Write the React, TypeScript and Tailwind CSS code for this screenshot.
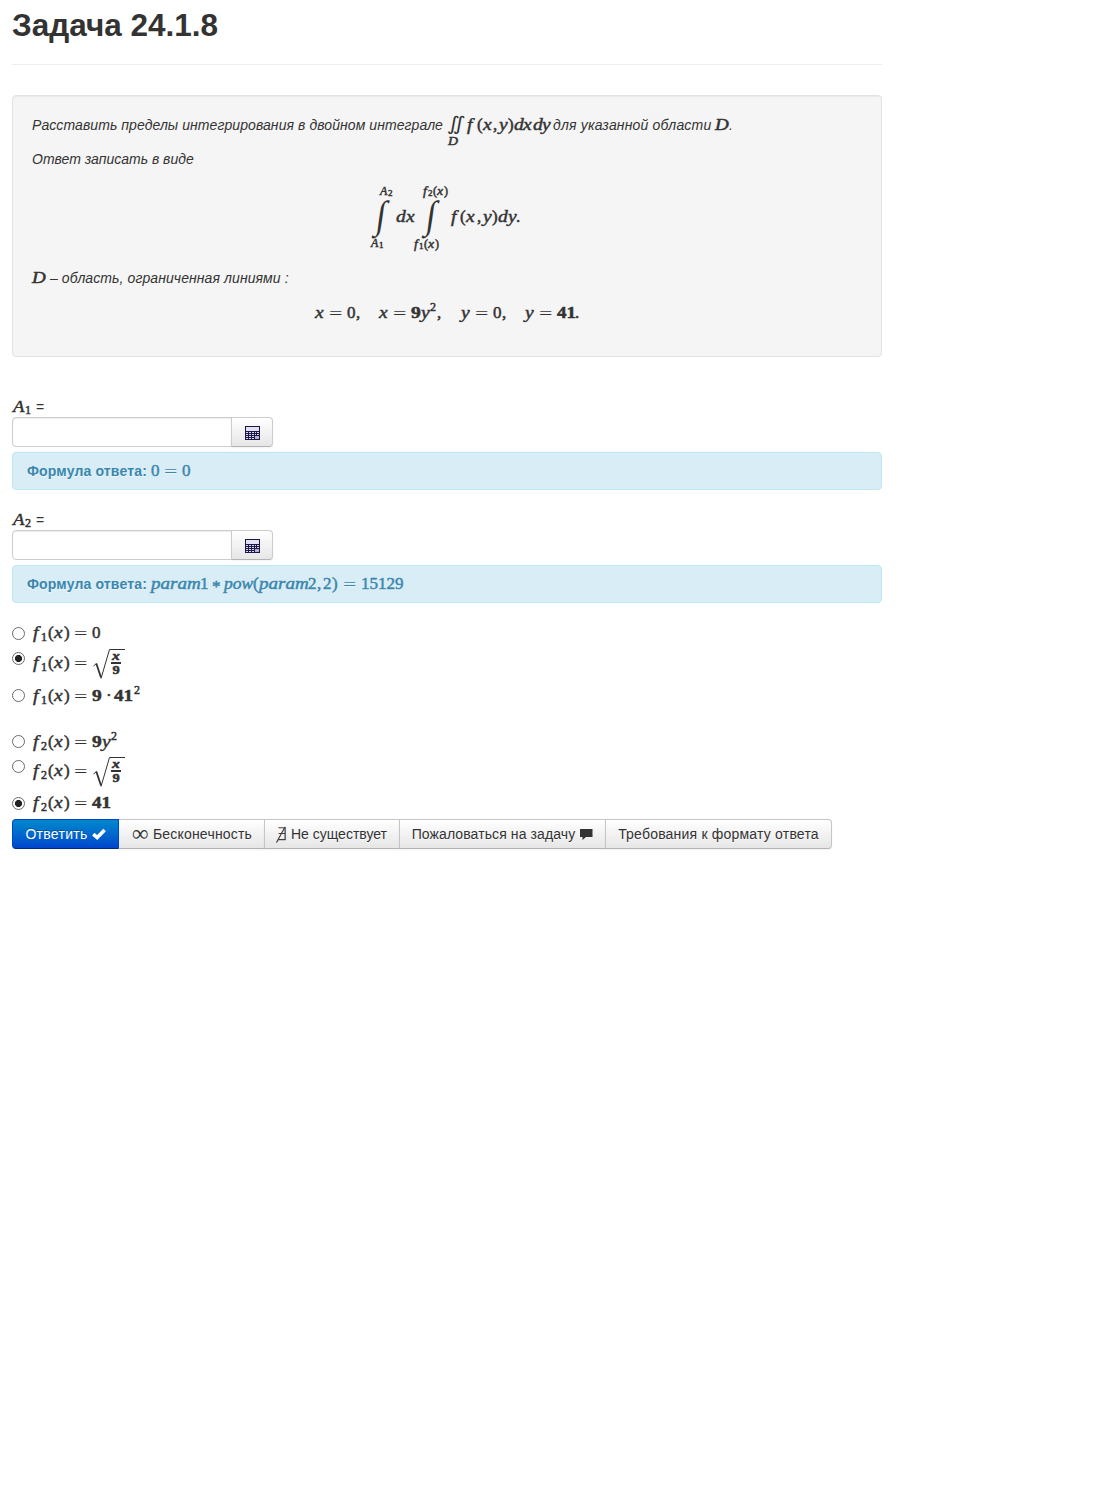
import type { ReactNode } from "react";

/* One fixed-width math atom. */
function T({ c, children }: { c: string; children?: ReactNode }) {
  return <span className={"block shrink-0 whitespace-pre " + c}>{children}</span>;
}

/* Italic variable, slightly widened. */
function V({ c, children }: { c: string; children?: ReactNode }) {
  return (
    <span className={"block shrink-0 whitespace-pre italic [-webkit-text-stroke:0.45px_currentColor] " + c}>
      <span className="block w-full origin-left scale-x-[1.15]">{children}</span>
    </span>
  );
}

function Eq() {
  return (
    <span className="block w-[18px] shrink-0 [-webkit-text-stroke:0]">
      <span className="block w-[10px] origin-left translate-y-px scale-x-[1.4]">=</span>
    </span>
  );
}

const MATH =
  "flex h-5 shrink-0 font-['Liberation_Serif',serif] text-[17px] leading-5 not-italic [-webkit-text-stroke:0.5px_currentColor]";
const SCRIPT =
  "flex h-4 font-['Liberation_Serif',serif] text-[12px] leading-4 [-webkit-text-stroke:0.5px_currentColor]";
const INTEGRAL = "absolute -top-[2px] block origin-center scale-x-[0.88] -skew-x-[9deg] text-[39px] leading-5 [-webkit-text-stroke:0]";

function Sqrt() {
  return (
    <span className="relative -mt-[5px] flex h-8 w-[33px] shrink-0">
      <svg className="absolute left-0 top-0" width="33" height="32" viewBox="0 0 33 32" fill="none" stroke="currentColor">
        <path d="M1.5 18 L4.5 15.5" strokeWidth="1" />
        <path d="M4.3 15.5 L9 29.5" strokeWidth="1.8" />
        <path d="M9 30.5 L17.5 1.5 H33" strokeWidth="1" />
      </svg>
      <span className="ml-[19px] mt-[4px] flex w-[10px] flex-col items-center text-[12px] font-bold leading-[11px]">
        <span className="h-[9px] scale-x-[1.3] italic leading-[8px]">x</span>
        <span className="mt-px h-[2px] w-[10px] shrink-0 bg-current" />
        <span className="h-[11px] scale-x-[1.2] leading-[13px]">9</span>
      </span>
    </span>
  );
}

function Option({
  group,
  sub,
  checked,
  row,
  radio,
  math,
  children,
}: {
  group: string;
  sub: string;
  checked?: boolean;
  row: string;
  radio: string;
  math: string;
  children: ReactNode;
}) {
  return (
    <label className={"flex items-start " + row}>
      <input
        type="radio"
        name={group}
        defaultChecked={checked}
        className={
          "size-[13px] shrink-0 appearance-none rounded-full border border-[#6b6b6b] bg-white checked:bg-[radial-gradient(circle,#222_3.2px,transparent_3.9px)] " +
          radio
        }
      />
      <span className={MATH + " ml-2 " + math}>
        <V c="w-[8px]">f</V>
        <T c="w-[7px] translate-y-[4px] text-[12px]">{sub}</T>
        <T c="w-[6px]">(</T>
        <V c="w-[10px]">x</V>
        <T c="w-[10px]">)</T>
        <Eq />
        {children}
      </span>
    </label>
  );
}

function Calculator() {
  return (
    <svg className="translate-y-px" width="15" height="14" viewBox="0 0 15 14" shapeRendering="crispEdges">
      <rect width="15" height="14" fill="#1b1745" />
      <rect x="1" y="1" width="13" height="4" fill="#e3e2f5" />
      <g fill="#dcdaf0">
        <path d="M1 6h2v1H1zM4 6h2v1H4zM7 6h2v1H7zM10 6h1v1h-1zM12 6h2v1h-2z" />
        <path d="M1 8h2v1H1zM4 8h2v1H4zM7 8h2v1H7zM10 8h1v1h-1zM12 8h2v1h-2z" />
        <path d="M1 10h2v1H1zM4 10h2v1H4zM7 10h2v1H7z" />
        <path d="M1 12h2v1H1zM4 12h2v1H4zM7 12h2v1H7z" />
      </g>
      <rect x="10" y="10" width="4" height="3" fill="#b3b0d4" />
    </svg>
  );
}

function Field({ sub, children }: { sub: string; children: ReactNode }) {
  return (
    <div className="h-[113px]">
      <div className="flex h-5">
        <span className={MATH}>
          <T c="w-[13px] origin-left scale-x-[1.1] pl-px italic">A</T>
          <T c="w-[11px] translate-y-[3px] text-[12px]">{sub}</T>
        </span>
        <span>=</span>
      </div>
      <div className="flex h-[30px]">
        <input className="h-[30px] w-[220px] rounded-l-[4px] border border-[#ccc] bg-white px-[6px] shadow-[inset_0_1px_1px_rgba(0,0,0,0.075)] outline-none" />
        <button className="-ml-px flex h-[30px] w-[42px] items-center justify-center rounded-r-[4px] border border-[#ccc] border-b-[#b3b3b3] bg-linear-to-b from-white to-[#e6e6e6] shadow-[0_1px_2px_rgba(0,0,0,0.05)]">
          <Calculator />
        </button>
      </div>
      <div className="mt-[5px] flex h-[38px] rounded-[4px] border border-[#bce8f1] bg-[#d9edf7] pl-[14px] pt-2 text-[#3a87ad] [text-shadow:0_1px_0_rgba(255,255,255,0.5)]">
        <span className="w-[124px] shrink-0 whitespace-nowrap font-bold tracking-[0.16px]">Формула ответа:</span>
        {children}
      </div>
    </div>
  );
}

const BTN =
  "flex h-[30px] shrink-0 items-center justify-center whitespace-nowrap border border-[#c5c5c5] border-b-[#b3b3b3] bg-linear-to-b from-white to-[#e6e6e6] leading-5 shadow-[inset_0_1px_0_rgba(255,255,255,0.2),0_1px_2px_rgba(0,0,0,0.05)] [text-shadow:0_1px_1px_rgba(255,255,255,0.75)] ";

export default function App() {
  return (
    <main className="ml-3 h-[1500px] w-[870px] font-['Liberation_Sans',Arial,sans-serif] text-[14px] leading-5 text-[#333]">
      <h1 className="h-[65px] border-b border-[#eee] pt-[5px] text-[31.5px] font-bold leading-10">Задача 24.1.8</h1>

      <section className="mt-[30px] h-[262px] rounded-[4px] border border-[#e3e3e3] bg-[#f5f5f5] px-[19px] pt-[19px] italic shadow-[inset_0_1px_1px_rgba(0,0,0,0.05)]">
        <div className="flex h-[34px] whitespace-nowrap">
          <span className="w-[416px] shrink-0 tracking-[0.08px]">Расставить пределы интегрирования в двойном интеграле</span>
          <span className={MATH}>
            <span className="relative block w-[19px]">
              <span className="block w-[14px] origin-left -translate-y-px scale-x-[1.15] -skew-x-6 text-[19px] tracking-[-2px] [-webkit-text-stroke:0]">∬</span>
              <span className={SCRIPT + " absolute left-0 top-[18px] origin-left scale-x-[1.15] italic"}>D</span>
            </span>
            <V c="w-[10px]">f</V>
            <T c="w-[6px]">(</T>
            <V c="w-[10px]">x</V>
            <T c="w-[6px]">,</T>
            <V c="w-[9px]">y</V>
            <T c="w-[6px]">)</T>
            <V c="w-[9px]">d</V>
            <V c="w-[10px]">x</V>
            <V c="w-[9px]">d</V>
            <V c="w-[11px]">y</V>
          </span>
          <span className="w-[162px] shrink-0 tracking-[0.18px]">для указанной области</span>
          <span className={MATH}>
            <T c="w-[14px] origin-left scale-x-[1.12] italic">D</T>
          </span>
          <span>.</span>
        </div>
        <p className="h-[34px]">Ответ записать в виде</p>

        <div className={MATH + " !h-[85px] ml-[338px] pt-[24px]"}>
          <span className="relative block w-[26px]">
            <span className={SCRIPT + " absolute -top-[24px] left-[10px]"}>
              <T c="w-[8px] italic">A</T>
              <T c="translate-y-[2px] text-[9px]">2</T>
            </span>
            <span className={INTEGRAL + " left-[6px]"}>∫</span>
            <span className={SCRIPT + " absolute left-[1px] top-[28px]"}>
              <T c="w-[8px] italic">A</T>
              <T c="translate-y-[2px] text-[9px]">1</T>
            </span>
          </span>
          <V c="w-[10px]">d</V>
          <V c="w-[14px]">x</V>
          <span className="relative block w-[31px]">
            <span className={SCRIPT + " absolute -top-[24px] left-[2px]"}>
              <V c="w-[6px] pl-px">f</V>
              <T c="w-[5px] translate-y-[2px] text-[9px]">2</T>
              <T c="w-[4px]">(</T>
              <V c="w-[7px]">x</V>
              <T c="">)</T>
            </span>
            <span className={INTEGRAL + " left-[6px]"}>∫</span>
            <span className={SCRIPT + " absolute -left-[7px] top-[29px]"}>
              <V c="w-[6px] pl-px">f</V>
              <T c="w-[5px] translate-y-[2px] text-[9px]">1</T>
              <T c="w-[4px]">(</T>
              <V c="w-[7px]">x</V>
              <T c="">)</T>
            </span>
          </span>
          <V c="w-[9px]">f</V>
          <T c="w-[6px]">(</T>
          <V c="w-[11px]">x</V>
          <T c="w-[6px]">,</T>
          <V c="w-[9px]">y</V>
          <T c="w-[6px]">)</T>
          <V c="w-[10px]">d</V>
          <V c="w-[8px]">y</V>
          <T c="">.</T>
        </div>

        <div className="flex h-[34px]">
          <span className={MATH}>
            <T c="w-[18px] origin-left scale-x-[1.12] italic">D</T>
          </span>
          <span className="tracking-[0.09px]">– область, ограниченная линиями :</span>
        </div>

        <div className={MATH + " ml-[283px] translate-y-px"}>
          <V c="w-[14px]">x</V>
          <Eq />
          <T c="w-[9px]">0</T>
          <T c="w-[23px]">,</T>
          <V c="w-[14px]">x</V>
          <Eq />
          <T c="w-[10px] origin-left scale-x-[1.15] font-bold">9</T>
          <V c="w-[9px]">y</V>
          <T c="w-[7px] -translate-y-[6px] text-[12px]">2</T>
          <T c="w-[24px]">,</T>
          <V c="w-[14px]">y</V>
          <Eq />
          <T c="w-[9px]">0</T>
          <T c="w-[23px]">,</T>
          <V c="w-[14px]">y</V>
          <Eq />
          <T c="w-[18px] origin-left scale-x-[1.12] font-bold">41</T>
          <T c="">.</T>
        </div>
      </section>

      <div className="mt-[40px] h-[225px]">
        <Field sub="1">
          <span className={MATH}>
            <T c="w-[13px]">0</T>
            <Eq />
            <T c="">0</T>
          </span>
        </Field>
        <Field sub="2">
          <span className={MATH}>
            <T c="w-[49px] origin-left scale-x-[1.12] italic">param</T>
            <T c="w-[12px]">1</T>
            <T c="w-[12px] translate-y-[3px]">*</T>
            <T c="w-[29px] origin-left scale-x-[1.03] italic">pow</T>
            <T c="w-[6px]">(</T>
            <T c="w-[49px] origin-left scale-x-[1.12] italic">param</T>
            <T c="w-[9px]">2</T>
            <T c="w-[6px]">,</T>
            <T c="w-[9px]">2</T>
            <T c="w-[11px]">)</T>
            <Eq />
            <T c="">15129</T>
          </span>
        </Field>
      </div>

      <div>
        <Option group="f1" sub="1" row="h-[26px]" radio="mt-[5px]" math="mt-px">
          <T c="">0</T>
        </Option>
        <Option group="f1" sub="1" checked row="h-[37px]" radio="mt-[4px]" math="mt-[5px]">
          <Sqrt />
        </Option>
        <Option group="f1" sub="1" row="h-[46px]" radio="mt-[4px]" math="mt-px">
          <T c="w-[14px] origin-left scale-x-[1.15] font-bold">9</T>
          <T c="w-[8px]">·</T>
          <T c="w-[20px] origin-left scale-x-[1.12] font-bold">41</T>
          <T c="-translate-y-[6px] text-[12px]">2</T>
        </Option>
        <Option group="f2" sub="2" row="h-[25px]" radio="mt-[4px]" math="mt-px">
          <T c="w-[10px] origin-left scale-x-[1.15] font-bold">9</T>
          <V c="w-[9px]">y</V>
          <T c="-translate-y-[6px] text-[12px]">2</T>
        </Option>
        <Option group="f2" sub="2" row="h-[36px]" radio="mt-[4px]" math="mt-[5px]">
          <Sqrt />
        </Option>
        <Option group="f2" sub="2" checked row="h-[27px]" radio="mt-[5px]" math="mt-px">
          <T c="origin-left scale-x-[1.12] font-bold">41</T>
        </Option>
      </div>

      <div className="flex">
        <button className="flex h-[30px] w-[107px] shrink-0 items-center justify-center rounded-l-[4px] border border-[#04c] border-b-[#002a80] bg-linear-to-b from-[#08c] to-[#04c] tracking-[0.3px] text-white [text-shadow:0_-1px_0_rgba(0,0,0,0.25)]">
          Ответить
          <svg className="ml-1" width="14" height="14" viewBox="0 0 14 14" fill="none" stroke="white" strokeWidth="3.6">
            <path d="M1.3 7.2 L5.2 10.6 L12.6 3" />
          </svg>
        </button>
        <button className={BTN + "w-[146px] border-l-0 tracking-[0.2px]"}>
          <span className="mr-1 w-4 font-['Liberation_Serif',serif] text-[23px]">∞</span>
          <span className="translate-x-px">Бесконечность</span>
        </button>
        <button className={BTN + "-ml-px w-[136px]"}>
          <span className="relative mr-[2px] block h-5 w-[12px]">
            <span className="block -translate-x-px font-['DejaVu_Sans',sans-serif] text-[17px] font-extralight leading-5 [-webkit-text-stroke:0.3px_currentColor]">∃</span>
            <svg className="absolute -left-px top-[2px]" width="12" height="17" viewBox="0 0 12 17" fill="none" stroke="#333" strokeWidth="1.1">
              <path d="M0.5 16.5 L9 1" />
            </svg>
          </span>
          Не существует
        </button>
        <button className={BTN + "-ml-px w-[207px] tracking-[0.1px]"}>
          Пожаловаться на задачу
          <svg className="ml-[5px]" width="13" height="12" viewBox="0 0 13 12" fill="#333">
            <path d="M0 1h12.5v8H6L2.5 12V9H0z" />
          </svg>
        </button>
        <button className={BTN + "-ml-px w-[227px] rounded-r-[4px] tracking-[0.2px]"}>Требования к формату ответа</button>
      </div>
    </main>
  );
}
